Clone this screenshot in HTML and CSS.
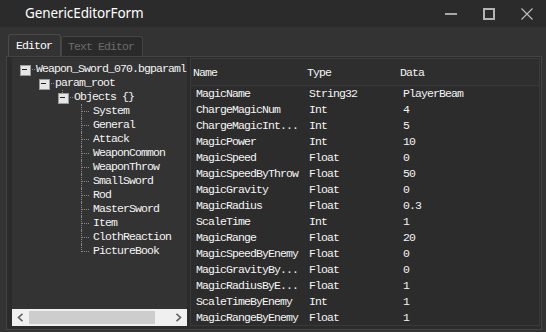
FILE: index.html
```html
<!DOCTYPE html>
<html>
<head>
<meta charset="utf-8">
<title>GenericEditorForm</title>
<link rel="stylesheet" href="styles.css">
</head>
<body>
<div class="window">
  <div class="titlebar">
    <span class="title">GenericEditorForm</span>
    <div class="controls">
      <span class="ctl"><svg width="12" height="12" viewBox="0 0 12 12"><rect x="0" y="5" width="12" height="2" fill="#a8a8a8"/></svg></span>
      <span class="ctl"><svg width="12" height="12" viewBox="0 0 12 12"><rect x="1" y="1" width="10" height="10" fill="none" stroke="#b4b4b4" stroke-width="2"/></svg></span>
      <span class="ctl"><svg width="12" height="12" viewBox="0 0 12 12"><path d="M0.5 0.5 L11.5 11.5 M11.5 0.5 L0.5 11.5" stroke="#c0c0c0" stroke-width="1.1" fill="none"/></svg></span>
    </div>
  </div>
  <div class="client">
    <div class="tabs">
      <div class="tab active">Editor</div>
      <div class="tab">Text Editor</div>
    </div>
    <div class="page">
      <div class="tree">
        <div class="tree-body">
          <div class="node l0"><span class="glyph box"></span><span class="label">Weapon_Sword_070.bgparaml</span></div>
          <div class="node l1"><span class="glyph box"></span><span class="label">param_root</span></div>
          <div class="node l2"><span class="glyph box up"></span><span class="label">Objects {}</span></div>
          <div class="node l3"><span class="glyph leaf"></span><span class="label">System</span></div>
          <div class="node l3"><span class="glyph leaf"></span><span class="label">General</span></div>
          <div class="node l3"><span class="glyph leaf"></span><span class="label">Attack</span></div>
          <div class="node l3"><span class="glyph leaf"></span><span class="label">WeaponCommon</span></div>
          <div class="node l3"><span class="glyph leaf"></span><span class="label">WeaponThrow</span></div>
          <div class="node l3"><span class="glyph leaf"></span><span class="label">SmallSword</span></div>
          <div class="node l3"><span class="glyph leaf"></span><span class="label">Rod</span></div>
          <div class="node l3"><span class="glyph leaf"></span><span class="label">MasterSword</span></div>
          <div class="node l3"><span class="glyph leaf"></span><span class="label">Item</span></div>
          <div class="node l3"><span class="glyph leaf"></span><span class="label">ClothReaction</span></div>
          <div class="node l3"><span class="glyph leaf last"></span><span class="label">PictureBook</span></div>
        </div>
        <div class="hscroll">
          <span class="arrow"><svg width="7" height="9" viewBox="0 0 7 9"><path d="M5.5 0.8 L1.5 4.5 L5.5 8.2" stroke="#606060" stroke-width="1.6" fill="none"/></svg></span>
          <span class="track"><span class="thumb"></span></span>
          <span class="arrow"><svg width="7" height="9" viewBox="0 0 7 9"><path d="M1.5 0.8 L5.5 4.5 L1.5 8.2" stroke="#606060" stroke-width="1.6" fill="none"/></svg></span>
        </div>
      </div>
      <div class="list">
        <div class="list-head">
          <span class="c-name">Name</span><span class="c-type">Type</span><span class="c-data">Data</span>
        </div>
        <div class="rows">
          <div class="row"><span class="c-name">MagicName</span><span class="c-type">String32</span><span class="c-data">PlayerBeam</span></div>
          <div class="row"><span class="c-name">ChargeMagicNum</span><span class="c-type">Int</span><span class="c-data">4</span></div>
          <div class="row"><span class="c-name">ChargeMagicInt...</span><span class="c-type">Int</span><span class="c-data">5</span></div>
          <div class="row"><span class="c-name">MagicPower</span><span class="c-type">Int</span><span class="c-data">10</span></div>
          <div class="row"><span class="c-name">MagicSpeed</span><span class="c-type">Float</span><span class="c-data">0</span></div>
          <div class="row"><span class="c-name">MagicSpeedByThrow</span><span class="c-type">Float</span><span class="c-data">50</span></div>
          <div class="row"><span class="c-name">MagicGravity</span><span class="c-type">Float</span><span class="c-data">0</span></div>
          <div class="row"><span class="c-name">MagicRadius</span><span class="c-type">Float</span><span class="c-data">0.3</span></div>
          <div class="row"><span class="c-name">ScaleTime</span><span class="c-type">Int</span><span class="c-data">1</span></div>
          <div class="row"><span class="c-name">MagicRange</span><span class="c-type">Float</span><span class="c-data">20</span></div>
          <div class="row"><span class="c-name">MagicSpeedByEnemy</span><span class="c-type">Float</span><span class="c-data">0</span></div>
          <div class="row"><span class="c-name">MagicGravityBy...</span><span class="c-type">Float</span><span class="c-data">0</span></div>
          <div class="row"><span class="c-name">MagicRadiusByE...</span><span class="c-type">Float</span><span class="c-data">1</span></div>
          <div class="row"><span class="c-name">ScaleTimeByEnemy</span><span class="c-type">Int</span><span class="c-data">1</span></div>
          <div class="row"><span class="c-name">MagicRangeByEnemy</span><span class="c-type">Float</span><span class="c-data">1</span></div>
        </div>
      </div>
    </div>
  </div>
</div>
</body>
</html>
```

FILE: styles.css
```css
* { box-sizing: border-box; margin: 0; padding: 0; }
html, body { width: 546px; height: 332px; overflow: hidden; background: #333333; }
body {
  font-family: "Liberation Mono", "DejaVu Sans Mono", monospace;
  font-size: 11.5px;
  letter-spacing: -0.9px;
  color: #f4f4f4;
}
.window { display: flex; flex-direction: column; height: 332px; }

.titlebar { height: 27px; background: #2b2b2b; display: flex; align-items: center; flex: none; }
.title {
  flex: 1;
  margin-left: 25px;
  font-family: "Noto Sans", "Open Sans", sans-serif;
  font-size: 13.5px;
  letter-spacing: -0.1px;
  color: #ffffff;
  line-height: 27px;
}
.controls { display: flex; }
.ctl { width: 38px; height: 27px; display: flex; align-items: center; justify-content: center; }

.client { flex: 1; display: flex; flex-direction: column; padding: 7px 4px 2px 6px; min-height: 0; }

.tabs { display: flex; align-items: flex-end; height: 22px; padding-left: 2px; flex: none; }
.tab {
  height: 20px;
  line-height: 19px;
  padding: 0 8px 0 6px;
  background: #2a2a2a;
  border: 1px solid #444444;
  border-bottom: none;
  border-radius: 3px 3px 0 0;
  color: #6c6c6c;
}
.tab.active {
  height: 22px;
  line-height: 21px;
  width: 53px;
  padding: 0 0 0 7px;
  background: #333333;
  color: #ffffff;
  border-color: #4a4a4a;
}

.page {
  flex: 1;
  display: flex;
  gap: 3px;
  background: #2b2b2b;
  border: 1px solid #444444;
  padding: 1px 1px 3px 5px;
  min-height: 0;
}

.tree {
  width: 175px;
  flex: none;
  display: flex;
  flex-direction: column;
  background: #333333;
}
.tree-body { flex: 1; padding-top: 4px; overflow: hidden; }
.node { height: 14px; line-height: 14px; display: flex; white-space: nowrap; }
.node.l0 { padding-left: 8px; }
.node.l1 { padding-left: 27px; }
.node.l2 { padding-left: 46px; }
.node.l3 { padding-left: 65px; }

.glyph { position: relative; width: 16px; height: 14px; flex: none; }
.glyph.box::before {
  content: "";
  position: absolute;
  left: 0; top: 3px;
  width: 9px; height: 9px;
  background: #e6e6e6;
  border: 1px solid #9a9a9a;
}
.glyph.box::after {
  content: "";
  position: absolute;
  left: 2px; top: 7px;
  width: 5px; height: 1px;
  background: #202020;
}
.glyph.box {
  background-image: repeating-linear-gradient(to right, #8a8a8a 0 1px, transparent 1px 2px);
  background-size: 6px 1px;
  background-repeat: no-repeat;
  background-position: 10px 7px;
}
.glyph.box.up {
  background-image:
    repeating-linear-gradient(to right, #8a8a8a 0 1px, transparent 1px 2px),
    repeating-linear-gradient(to bottom, #8a8a8a 0 1px, transparent 1px 2px);
  background-size: 6px 1px, 1px 3px;
  background-repeat: no-repeat, no-repeat;
  background-position: 10px 7px, 4px 0;
}
.glyph.leaf::before {
  content: "";
  position: absolute;
  left: 4px; top: 0;
  height: 14px;
  border-left: 1px dotted #8a8a8a;
}
.glyph.leaf.last::before { height: 8px; }
.glyph.leaf::after {
  content: "";
  position: absolute;
  left: 5px; top: 7px;
  width: 7px;
  border-top: 1px dotted #8a8a8a;
}

.hscroll {
  height: 17px;
  flex: none;
  display: flex;
  align-items: center;
  background: #f0f0f0;
}
.arrow { width: 17px; height: 17px; display: flex; align-items: center; justify-content: center; flex: none; }
.track { flex: 1; height: 13px; display: flex; }
.thumb { width: 126px; height: 13px; background: #cdcdcd; }

.list {
  flex: 1;
  display: flex;
  flex-direction: column;
  background: #2c2c2c;
  border: 1px solid #3a3a3a;
  min-width: 0;
}
.list-head {
  height: 27px;
  display: flex;
  align-items: center;
  background: #2e2e2e;
  border-bottom: 1px solid #383838;
  flex: none;
}
.list-head span { padding-left: 2px; }
.c-name { width: 114px; flex: none; white-space: nowrap; }
.c-type { width: 93px; flex: none; white-space: nowrap; }
.c-data { flex: 1; white-space: nowrap; }
.rows { flex: 1; }
.row { height: 16px; line-height: 16px; display: flex; }
.row span { padding-left: 5px; }
.row .c-type { padding-left: 4px; }
```
